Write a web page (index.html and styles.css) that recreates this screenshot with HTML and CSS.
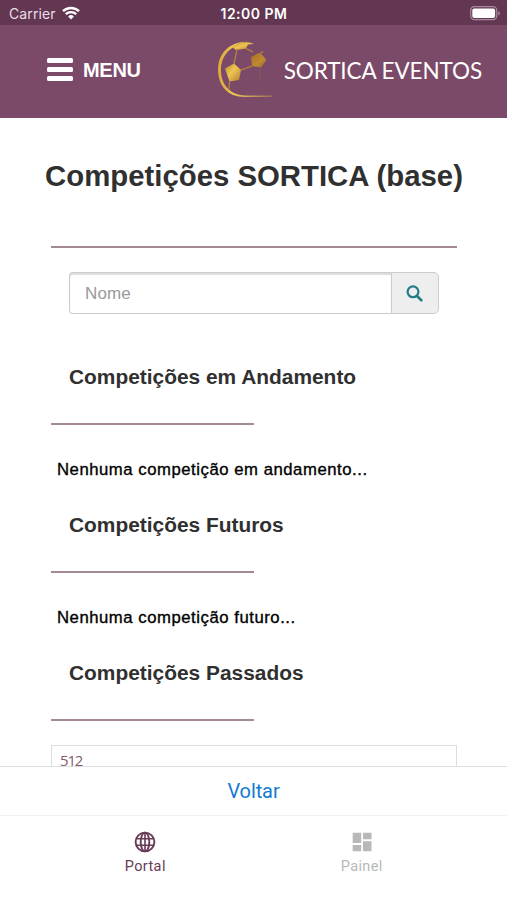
FILE: index.html
```html
<!DOCTYPE html>
<html lang="pt">
<head>
<meta charset="utf-8">
<title>Sortica Eventos</title>
<link rel="stylesheet" href="styles.css">
</head>
<body>
<div class="app">
  <div class="status">
    <div class="carrier"><span>Carrier</span>
      <svg width="18" height="14" viewBox="0 0 18 14" fill="none" stroke="#fff" stroke-width="2.4"><path d="M1 5.2a11.5 11.5 0 0 1 16 0M3.8 8.2a7.5 7.5 0 0 1 10.4 0"/><path d="M9 13.6 6.1 10.5a4.2 4.2 0 0 1 5.8 0z" fill="#fff" stroke="none"/></svg>
    </div>
    <div class="clock">12:00 PM</div>
    <svg class="battery" width="31" height="15" viewBox="0 0 31 15"><rect x=".7" y=".7" width="26" height="13" rx="3.6" fill="none" stroke="#a78a9f" stroke-width="1.2"/><rect x="2.3" y="2.4" width="22.8" height="9.6" rx="2" fill="#fff"/><path d="M28.2 5v4.6q1.6-.7 1.6-2.3T28.2 5z" fill="#a78a9f"/></svg>
  </div>
  <header class="header">
    <div class="menu"><span class="bars"><i></i><i></i><i></i></span><span class="menu-label">MENU</span></div>
    <div class="brand">
      <svg width="56" height="57" viewBox="0 0 56 57">
        <defs><linearGradient id="gold" x1="0" y1="0" x2="1" y2="1"><stop offset="0" stop-color="#c18a2c"/><stop offset=".45" stop-color="#edc552"/><stop offset="1" stop-color="#b57b2c"/></linearGradient>
        <linearGradient id="bronze" x1="0" y1="0" x2="1" y2="1"><stop offset="0" stop-color="#a86c22"/><stop offset=".6" stop-color="#c08a32"/><stop offset="1" stop-color="#94602f"/></linearGradient>
        <linearGradient id="line" gradientUnits="userSpaceOnUse" x1="0" y1="0" x2="55" y2="0"><stop offset="0" stop-color="#d9a53b"/><stop offset=".3" stop-color="#edc552"/><stop offset="1" stop-color="#9c6c58"/></linearGradient></defs>
        <path d="M31 .8C12 .2 1 13 1 28.500C1 44 10 56 28 56H55v-1.500H29C13 54 4 44 4 29C4 15 13 4 31 .8z" fill="url(#line)"/>
        <path d="M15 6 23 2Q32 0 37 3L31 3.500 29 7.500 19 9z" fill="url(#gold)"/>
        <path d="M8 27.500 17 22.500 24 29 22 39 12.500 40.500z" fill="url(#gold)"/>
        <path d="M34 16 43 11.500 49.500 19 44 26.500 35 25z" fill="url(#bronze)"/>
        <path d="M20 8 17 23M12.500 40.500 12 48.500M24 29 35 25M29 7.500 36 11M44 12 46 10.500" stroke="#bd8a38" stroke-width="1.200" fill="none"/>
        <path d="M43 27v11" stroke="#926158" stroke-width=".8"/>
      </svg>
      <span class="brand-name">SORTICA EVENTOS</span>
    </div>
  </header>
  <main class="content">
    <h1>Competições SORTICA (base)</h1>
    <hr class="rule">
    <div class="search">
      <div class="field">Nome</div>
      <div class="go"><svg width="17" height="17" viewBox="0 0 17 17" fill="none" stroke="#267c87"><circle cx="7" cy="6.800" r="5.400" stroke-width="2.300"/><path d="m11 11 4.300 4.300" stroke-width="2.700" stroke-linecap="round"/></svg></div>
    </div>
    <section><h2>Competições em Andamento</h2><hr class="rule half"><p>Nenhuma competição em andamento...</p></section>
    <section><h2>Competições Futuros</h2><hr class="rule half"><p>Nenhuma competição futuro...</p></section>
    <section class="past"><h2>Competições Passados</h2><hr class="rule half"><div class="item">512</div></section>
  </main>
  <div class="back">Voltar</div>
  <nav class="tabs">
    <div class="tab active">
      <svg width="22" height="22" viewBox="0 0 22 22" fill="none" stroke="currentColor" stroke-width="1.900"><circle cx="11" cy="11" r="9.400"/><ellipse cx="11" cy="11" rx="4.300" ry="9.400"/><path d="M2.500 7.800h17M2.500 14.200h17M11 2v18" stroke-width="1.600"/></svg>
      <span>Portal</span>
    </div>
    <div class="tab">
      <svg width="22" height="22" viewBox="0 0 22 22" fill="currentColor"><path d="M1.700 1.800h8.500v10.300H1.700zM12 1.800h8.500v6.500H12zM1.700 14h8.500v6.300H1.700zM12 10.200h8.500v10.100H12z"/></svg>
      <span>Painel</span>
    </div>
  </nav>
</div>
</body>
</html>
```

FILE: styles.css
```css
* { box-sizing: border-box; }
body { margin: 0; font-family: "Liberation Sans", sans-serif; background: #fff; }
svg { display: block; }
.app { width: 507px; height: 900px; display: flex; flex-direction: column; overflow: hidden; }
.status { height: 25px; flex: none; background: #633652; color: #fff; display: grid; grid-template-columns: 1fr auto 1fr; align-items: center; padding: 2px 6px 0 7px; font: 14px/22px Inter, sans-serif; }
.carrier { display: flex; gap: 6px; padding-left: 2px; color: #eadfe7; letter-spacing: .1px; }
.carrier svg { margin-top: 3px; }
.clock { font-weight: 600; font-size: 14px; letter-spacing: .5px; }
.battery { justify-self: end; }
.header { height: 93px; flex: none; background: #7b4a68; color: #fff; display: flex; justify-content: space-between; padding: 0 25px 0 47px; }
.menu { display: flex; align-items: center; gap: 10px; height: 88px; }
.bars { display: flex; flex-direction: column; gap: 4px; width: 26px; }
.bars i { height: 5px; border-radius: 1.500px; background: #fff; }
.menu-label { font-weight: bold; font-size: 20px; line-height: 24px; letter-spacing: -.3px; margin-top: 1px; }
.brand { display: flex; align-items: center; gap: 11px; height: 88px; }
.brand-name { font: 22.500px/26px Lato, sans-serif; letter-spacing: -.1px; white-space: nowrap; margin-top: 3px; }
.content { flex: 1; min-height: 0; overflow: hidden; padding: 0 50px 0 51px; }
h1 { margin: 40px -40px 0; text-align: center; font-size: 29.350px; line-height: 36px; color: #303030; white-space: nowrap; }
.rule { border: 0; height: 2px; background: #a58993; margin: 52px 0 0; }
.search { display: flex; height: 42px; margin: 24px 18px 0; }
.field { flex: 1; border: 1px solid #ccc; border-right: 0; border-radius: 4px 0 0 4px; padding: 0 15px; line-height: 41px; font-size: 17px; letter-spacing: .1px; color: #999; box-shadow: inset 0 2px 1px #ddd; }
.go { width: 48px; border: 1px solid #ccc; border-radius: 0 5px 5px 0; background: #eee; display: grid; place-items: center; padding-right: 2px; }
section { height: 148px; }
.search + section { margin-top: 50px; }
h2 { margin: 0 18px; font-size: 20.900px; line-height: 26px; color: #303030; }
.half { width: 203px; margin-top: 33px; }
p { margin: 33px 6px 0; font-size: 16.700px; line-height: 24px; letter-spacing: .54px; color: #000; -webkit-text-stroke: .35px #000; white-space: nowrap; }
.item { margin-top: 24px; height: 70px; border: 1px solid #ddd; padding: 3px 8px; font: 15px/22px "Open Sans", sans-serif; letter-spacing: -1.200px; color: #825b6b; }
.back { height: 50px; flex: none; border-top: 1px solid #ddd; border-bottom: 1px solid #f2f2f2; text-align: center; color: #147bd1; font: 20px/48px Roboto, sans-serif; letter-spacing: -.1px; }
.tabs { height: 84px; flex: none; display: flex; padding: 0 37px; }
.tab { flex: 1; display: flex; flex-direction: column; align-items: center; gap: 4px; padding-top: 15px; color: #b8b8b8; font: 14.500px/20px Roboto, sans-serif; letter-spacing: .4px; }
.tab.active { color: #683b57; }
```
